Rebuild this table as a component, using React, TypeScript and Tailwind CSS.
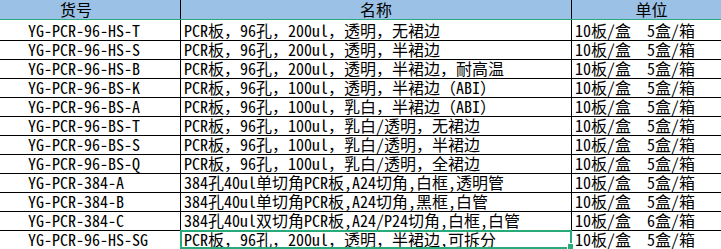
import React from 'react';

type Row = {
  code: string;
  name: string;
  unit: string;
};

const rows: Row[] = [
  { code: 'YG-PCR-96-HS-T', name: 'PCR板，96孔，200ul，透明，无裙边', unit: '10板/盒  5盒/箱' },
  { code: 'YG-PCR-96-HS-S', name: 'PCR板，96孔，200ul，透明，半裙边', unit: '10板/盒  5盒/箱' },
  { code: 'YG-PCR-96-HS-B', name: 'PCR板，96孔，200ul，透明，半裙边，耐高温', unit: '10板/盒  5盒/箱' },
  { code: 'YG-PCR-96-BS-K', name: 'PCR板，96孔，100ul，透明，半裙边（ABI）', unit: '10板/盒  5盒/箱' },
  { code: 'YG-PCR-96-BS-A', name: 'PCR板，96孔，100ul，乳白，半裙边（ABI）', unit: '10板/盒  5盒/箱' },
  { code: 'YG-PCR-96-BS-T', name: 'PCR板，96孔，100ul，乳白/透明，无裙边', unit: '10板/盒  5盒/箱' },
  { code: 'YG-PCR-96-BS-S', name: 'PCR板，96孔，100ul，乳白/透明，半裙边', unit: '10板/盒  5盒/箱' },
  { code: 'YG-PCR-96-BS-Q', name: 'PCR板，96孔，100ul，乳白/透明，全裙边', unit: '10板/盒  5盒/箱' },
  { code: 'YG-PCR-384-A', name: '384孔40ul单切角PCR板,A24切角,白框,透明管', unit: '10板/盒  5盒/箱' },
  { code: 'YG-PCR-384-B', name: '384孔40ul单切角PCR板,A24切角,黑框,白管', unit: '10板/盒  5盒/箱' },
  { code: 'YG-PCR-384-C', name: '384孔40ul双切角PCR板,A24/P24切角,白框,白管', unit: '10板/盒  6盒/箱' },
  { code: 'YG-PCR-96-HS-SG', name: 'PCR板，96孔，200ul，透明，半裙边,可拆分', unit: '10板/盒  5盒/箱' },
];

const font = {
  fontFamily:
    '"Noto Sans Mono CJK SC", "Liberation Mono", "Noto Sans CJK SC", monospace',
};

const ProductSheet: React.FC = () => {
  return (
    <div
      className="w-[721px] h-[249px] overflow-hidden bg-white text-black text-[16px] whitespace-pre"
      style={font}
    >
      {/* header */}
      <div className="grid grid-cols-[181px_391px_1fr] h-[20px] bg-[#9bc2e6] border-b border-[#2aaa7a]">
        <div className="border-r border-black pl-[60px] flex items-end leading-none pb-[2px]">
          货号
        </div>
        <div className="border-r border-black flex items-end justify-center leading-none pb-[2px]">
          名称
        </div>
        <div className="flex items-end justify-center pl-[10px] leading-none pb-[2px]">
          单位
        </div>
      </div>

      {rows.map((row, i) => {
        const first = i === 0;
        const last = i === rows.length - 1;
        return (
          <div
            key={row.code}
            className={
              first
                ? 'grid grid-cols-[181px_391px_1fr] h-[20px]'
                : 'grid grid-cols-[181px_391px_1fr] h-[19px] border-t border-black'
            }
          >
            <div className="border-r border-black pl-[28px] flex items-end leading-none pb-[2px]">
              {row.code}
            </div>
            <div className="relative border-r border-black pl-[3px] flex items-end leading-none pb-[2px]">
              {row.name}
              {last && (
                <>
                  <div className="absolute left-[-1px] top-[-1px] right-[-1px] bottom-0 border-2 border-[#2aaa7a]" />
                  <div className="absolute right-[-2px] bottom-0 w-[5px] h-[5px] bg-[#2aaa7a] outline outline-1 outline-white" />
                </>
              )}
            </div>
            <div className="pl-[3px] flex items-end leading-none pb-[2px]">
              {row.unit}
            </div>
          </div>
        );
      })}
    </div>
  );
};

export default function App() {
  return <ProductSheet />;
}
